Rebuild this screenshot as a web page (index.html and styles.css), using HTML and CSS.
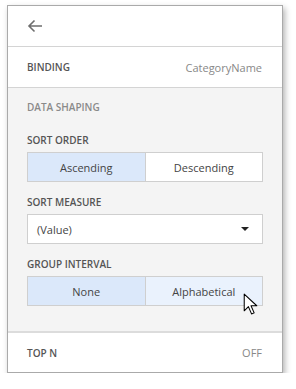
FILE: index.html
```html
<!DOCTYPE html>
<html lang="en">
<head>
    <meta charset="UTF-8">
    <title>Data Item Options</title>
    <link rel="stylesheet" href="styles.css">
</head>
<body>
    <div class="panel">
        <div class="panel-head">
            <button class="back-btn">
                <svg width="16" height="14" viewBox="0 0 16 14">
                    <path d="M15 7H2M7.5 1.5L2 7l5.5 5.5" fill="none" stroke="#6e6e6e" stroke-width="1.6"/>
                </svg>
            </button>
        </div>

        <div class="row">
            <span class="row-label">Binding</span>
            <span class="row-value">CategoryName</span>
        </div>

        <div class="section">
            <div class="section-title">Data Shaping</div>

            <div class="field">
                <label>Sort Order</label>
                <div class="btn-group">
                    <button class="seg active">Ascending</button>
                    <button class="seg">Descending</button>
                </div>
            </div>

            <div class="field">
                <label>Sort Measure</label>
                <div class="select">
                    <span>(Value)</span>
                    <span class="caret"></span>
                </div>
            </div>

            <div class="field">
                <label>Group Interval</label>
                <div class="btn-group">
                    <button class="seg active">None</button>
                    <button class="seg hover">Alphabetical</button>
                </div>
                <svg class="cursor" width="15" height="23" viewBox="0 0 14 22">
                    <path d="M1 1v16l4-4 3 7 2.5-1-3-6.8H13z" fill="#fff" stroke="#000" stroke-width="1" stroke-linejoin="round"/>
                </svg>
            </div>
        </div>

        <div class="row footer">
            <span class="row-label">Top N</span>
            <span class="row-value">OFF</span>
        </div>
    </div>
</body>
</html>
```

FILE: styles.css
```css
* { margin: 0; padding: 0; box-sizing: border-box; }
body {
    background: white;
    font-family: "Segoe UI", "Open Sans", sans-serif;
    font-size: 11px;
    color: #444;
    padding: 5px 13px 0 7px;
}
.panel {
    width: 276px;
    border: 1px solid #aaa;
    background: white;
    box-shadow: 2px 3px 6px rgba(0, 0, 0, 0.3);
}
.panel-head {
    height: 41px;
    border-bottom: 1px solid #d4d4d4;
    display: flex;
    align-items: center;
    padding-left: 19px;
}
.back-btn { border: none; background: none; display: flex; padding: 0; }
.row {
    height: 40px;
    display: flex;
    align-items: center;
    justify-content: space-between;
    padding: 0 20px 0 19px;
}
.row-label {
    text-transform: uppercase;
    font-weight: 600;
    color: #555;
    font-size: 10px;
}
.row-value { color: #888; font-size: 11px; }
.section {
    background: #f4f4f4;
    border-top: 1px solid #d4d4d4;
    border-bottom: 2px solid #dcdcdc;
    padding: 11px 19px 25px 19px;
}
.section-title {
    text-transform: uppercase;
    font-weight: 600;
    color: #8a8a8a;
    font-size: 10px;
    line-height: 16px;
    margin-bottom: 17px;
}
.field { position: relative; margin-bottom: 12px; }
.field:last-child { margin-bottom: 0; }
.field label {
    display: block;
    text-transform: uppercase;
    font-weight: 600;
    color: #555;
    font-size: 10px;
    line-height: 16px;
    margin-bottom: 4px;
}
.btn-group {
    display: flex;
    height: 30px;
    border: 1px solid #cfcfcf;
    background: white;
}
.seg {
    flex: 1;
    border: none;
    background: white;
    font-family: inherit;
    font-size: 11px;
    color: #444;
}
.seg + .seg { border-left: 1px solid #cfcfcf; }
.seg.active { background: #dbe8fa; }
.seg.hover { background: #eaf2fd; }
.select {
    height: 30px;
    border: 1px solid #cfcfcf;
    background: white;
    display: flex;
    align-items: center;
    justify-content: space-between;
    padding: 0 13px 0 9px;
    font-size: 11px;
    color: #444;
}
.caret {
    width: 0;
    height: 0;
    border-left: 4px solid transparent;
    border-right: 4px solid transparent;
    border-top: 4px solid #222;
}
.cursor { position: absolute; left: 216px; bottom: -10px; }
.footer { height: 39px; }
```
